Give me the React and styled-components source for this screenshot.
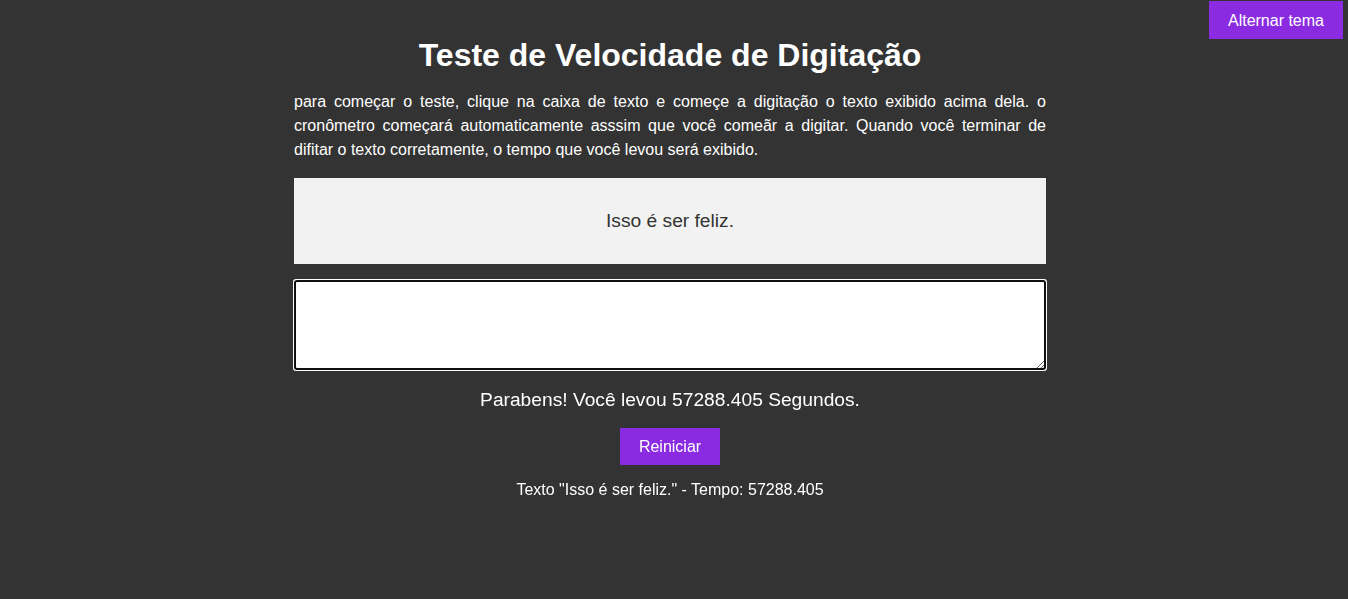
import React, { useState } from "react";
import styled, { createGlobalStyle } from "styled-components";

const GlobalStyle = createGlobalStyle`
  body {
    margin: 0;
    background-color: #333333;
    color: #ffffff;
    font-family: "Liberation Sans", Arial, sans-serif;
  }
`;

const Page = styled.div`
  padding: 0 8px 0 0;
`;

const Container = styled.div`
  width: 752px;
  margin: 0 auto;
  padding-top: 37px;
  display: flex;
  flex-direction: column;
  align-items: center;
`;

const Title = styled.h1`
  font-size: 32px;
  font-weight: bold;
  margin: 0 0 16px;
  line-height: 37px;
  text-align: center;
`;

const Instructions = styled.p`
  margin: 0 0 16px;
  font-size: 16px;
  line-height: 24px;
  text-align: justify;
  width: 100%;
`;

const TextDisplay = styled.div`
  width: 100%;
  height: 86px;
  background-color: #f2f2f2;
  color: #333333;
  font-size: 19.2px;
  display: flex;
  align-items: center;
  justify-content: center;
  margin-bottom: 16px;
`;

const Input = styled.textarea`
  width: 100%;
  height: 90px;
  box-sizing: border-box;
  padding: 5px;
  font-family: "Liberation Sans", Arial, sans-serif;
  font-size: 16px;
  margin: 0 0 19px;
  display: block;
`;

const Result = styled.p`
  margin: 0 0 17px;
  font-size: 19.2px;
  line-height: 22px;
  text-align: center;
`;

const Button = styled.button`
  background-color: #8a2be2;
  color: #ffffff;
  border: none;
  padding: 0 19px;
  height: 37px;
  font-family: "Liberation Sans", Arial, sans-serif;
  font-size: 16px;
  cursor: pointer;
`;

const ThemeButton = styled(Button)`
  position: fixed;
  top: 1px;
  right: 5px;
  height: 38px;
  padding: 1px 19px 0;
`;

const History = styled.div`
  margin-top: 16px;
  font-size: 16px;
  line-height: 18px;
  text-align: center;
`;

export default function App() {
  const [value, setValue] = useState("");
  const text = "Isso é ser feliz.";
  const time = "57288.405";

  return (
    <Page>
      <GlobalStyle />
      <ThemeButton>Alternar tema</ThemeButton>
      <Container>
        <Title>Teste de Velocidade de Digitação</Title>
        <Instructions>
          para começar o teste, clique na caixa de texto e começe a digitação o
          texto exibido acima dela. o cronômetro começará automaticamente asssim
          que você comeãr a digitar. Quando você terminar de difitar o texto
          corretamente, o tempo que você levou será exibido.
        </Instructions>
        <TextDisplay>{text}</TextDisplay>
        <Input autoFocus value={value} onChange={(e) => setValue(e.target.value)} />
        <Result>Parabens! Você levou {time} Segundos.</Result>
        <Button>Reiniciar</Button>
        <History>
          Texto "{text}" - Tempo: {time}
        </History>
      </Container>
    </Page>
  );
}
